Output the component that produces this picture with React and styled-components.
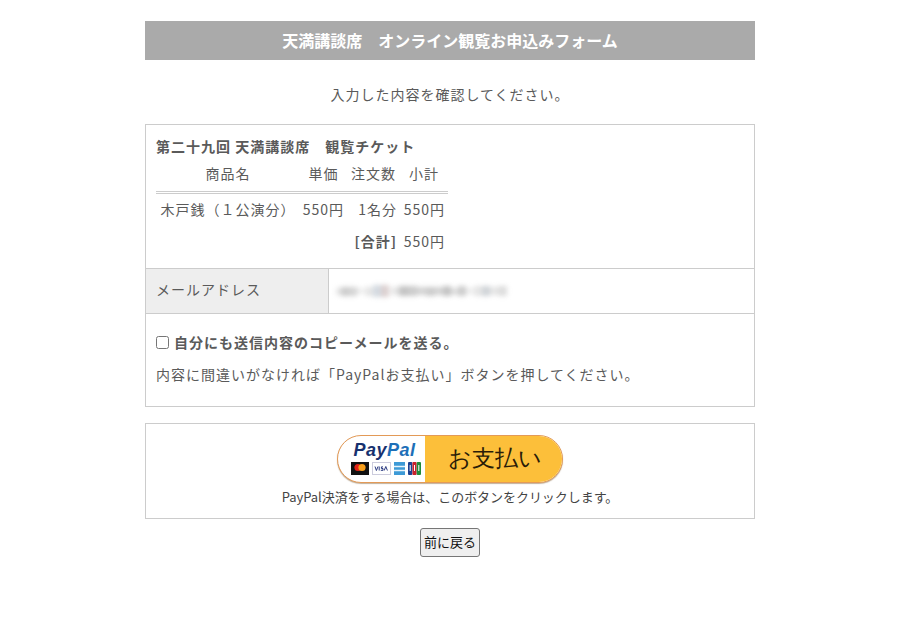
import React from "react";
import styled, { createGlobalStyle } from "styled-components";

const Global = createGlobalStyle`
  html, body { margin: 0; padding: 0; background: #fff; }
  body { font-family: "Noto Sans CJK JP", "Noto Sans", sans-serif; color: #5a5a5a; }
`;
const Page = styled.main`
  width: 610px;
  margin: 0 auto;
  padding: 21px 0 67px;
  display: flex;
  flex-direction: column;
  align-items: stretch;
`;
const Header = styled.h1`
  margin: 0;
  height: 39px;
  background: #aaa;
  color: #fff;
  font-size: 16px;
  font-weight: 700;
  line-height: 38px;
  text-align: center;
`;
const Lead = styled.p`
  margin: 0;
  height: 64px;
  font-size: 14px;
  line-height: 68px;
  letter-spacing: 1px;
  text-align: center;
`;
const Panel = styled.section`
  border: 1px solid #ccc;
  font-size: 14px;
  letter-spacing: 1px;
`;
const TicketRow = styled.div`
  height: 143px;
  box-sizing: border-box;
  padding: 9px 10px 0;
`;
const TicketTitle = styled.div`
  font-weight: 700;
  line-height: 24px;
`;
const Order = styled.table`
  border-collapse: collapse;
  width: 292px;
  margin-top: 4px;
  table-layout: fixed;
  font-size: 14px;
  letter-spacing: 1px;
  th, td { font-weight: 400; padding: 0; white-space: nowrap; }
  thead th { height: 22px; line-height: 22px; padding-bottom: 7px; border-bottom: 3px double #ccc; text-align: center; }
  tbody td { height: 34px; text-align: right; padding-right: 3px; }
  tbody tr:first-child td { height: 30px; }
  tbody td.name { text-align: center; padding-right: 0; }
  td strong { font-weight: 700; }
`;
const EmailRow = styled.div`
  display: grid;
  grid-template-columns: 183px 1fr;
  height: 45px;
  border-top: 1px solid #ccc;
  box-sizing: border-box;
`;
const EmailLabel = styled.div`
  background: #eee;
  border-right: 1px solid #ccc;
  padding-left: 10px;
  line-height: 41px;
`;
const EmailValue = styled.div`
  display: flex;
  align-items: center;
  padding-left: 7px;
`;
const Blur = styled.div`
  display: flex;
  align-items: center;
  height: 18px;
  filter: blur(2.4px);
  opacity: 0.5;
`;
const Chunk = styled.span`
  display: block;
  height: ${(p) => p.$h || 8}px;
  width: ${(p) => p.$w}px;
  background: ${(p) => p.$c || "#aaa"};
  margin-left: ${(p) => p.$g || 0}px;
`;
const CopyRow = styled.div`
  border-top: 1px solid #ccc;
  padding: 17px 10px 0;
  height: 93px;
  box-sizing: border-box;
`;
const CopyLabel = styled.label`
  display: flex;
  align-items: center;
  font-weight: 700;
  line-height: 22px;
`;
const Check = styled.input`
  width: 13px;
  height: 13px;
  margin: 1px 5px 0 0;
`;
const Note = styled.p`
  margin: 0;
  padding-top: 10px;
  line-height: 22px;
`;
const PayPanel = styled.section`
  margin-top: 16px;
  border: 1px solid #ccc;
  height: 96px;
  box-sizing: border-box;
  display: flex;
  flex-direction: column;
  align-items: center;
  padding-top: 11px;
`;
const PayButton = styled.button`
  width: 226px;
  height: 48px;
  padding: 0;
  border: 1px solid #e39a57;
  border-radius: 24px;
  overflow: hidden;
  display: grid;
  grid-template-columns: 87px 1fr;
  background: #fff;
  box-shadow: 0 1px 1px rgba(120, 80, 30, 0.45);
`;
const PayLeft = styled.span`
  display: flex;
  flex-direction: column;
  align-items: center;
  padding: 4px 0 0 8px;
`;
const PayWord = styled.span`
  font-family: "Liberation Sans", Arial, sans-serif;
  font-size: 18px;
  line-height: 20px;
  font-style: italic;
  font-weight: 700;
  letter-spacing: 0.5px;
  margin-left: -2px;
  color: #17316f;
  b { color: #1d6fb8; }
`;
const CardIcons = styled.span`
  display: flex;
  gap: 3px;
  margin-top: 2px;
`;
const PayRight = styled.span`
  background: #fcbf3a;
  color: #2a1c08;
  font-size: 23px;
  line-height: 44px;
  text-align: center;
  padding-left: 2px;
`;
const PayNote = styled.p`
  margin: 5px 0 0;
  font-size: 13px;
  line-height: 18px;
  letter-spacing: -0.05px;
  color: #444;
`;
const BackRow = styled.div`
  display: flex;
  justify-content: center;
  margin-top: 9px;
`;
const BackButton = styled.button`
  width: 60px;
  height: 29px;
  padding: 0 0 3px;
  font-family: inherit;
  font-size: 13px;
  color: #111;
  background: #efefef;
  border: 1px solid #767676;
  border-radius: 3px;
`;

const Cards = () => (
  <CardIcons>
    <svg width="18" height="13" viewBox="0 0 18 13"><rect width="18" height="13" fill="#111" /><circle cx="7" cy="5.5" r="3.6" fill="#e2231a" /><circle cx="11" cy="5.5" r="3.6" fill="#f79e1b" /></svg>
    <svg width="19" height="13" viewBox="0 0 19 13"><rect x=".5" y=".5" width="18" height="12" fill="#fff" stroke="#ccd" /><path d="M3 4.5l1.4 4 1.6-4M7.2 4.5v4M11 4.9H9.4v1.6H11V8.3H8.8M12.2 8.5l1.6-4 1.6 4" fill="none" stroke="#2a3a80" strokeWidth="1" /></svg>
    <svg width="11" height="13" viewBox="0 0 11 13"><rect width="11" height="13" fill="#3d9ad6" /><path d="M0 4.5h11M0 8.5h11" stroke="#e8f4fb" strokeWidth="1.4" /></svg>
    <svg width="13" height="13" viewBox="0 0 13 13"><rect width="4.3" height="13" rx="1" fill="#1b3f8f" /><rect x="4.4" width="4.2" height="13" rx="1" fill="#c8202c" /><rect x="8.7" width="4.3" height="13" rx="1" fill="#1e8a3a" /><path d="M2.2 3v6M6.5 3v6M10.8 3v6" stroke="#fff" strokeWidth="1" /></svg>
  </CardIcons>
);

const chunks = [
  [5, 7, "#ccc"], [8, 9, "#999"], [8, 9, "#aaa"], [7, 6, "#ddd"], [8, 9, "#ccc", 1],
  [8, 12, "#a9b6c4"], [8, 12, "#b8a0a0"], [8, 8, "#ccc", 2], [9, 10, "#888"], [9, 10, "#999"],
  [9, 8, "#aaa"], [9, 9, "#999"], [8, 8, "#aaa"], [8, 10, "#888"], [7, 7, "#bbb"],
  [8, 10, "#999"], [8, 6, "#ddd"], [8, 10, "#ccc"], [8, 10, "#a0a8b0"], [8, 8, "#ccc"], [9, 10, "#bbb"],
];

export default function App() {
  return (
    <>
      <Global />
      <Page>
        <Header>天満講談席　オンライン観覧お申込みフォーム</Header>
        <Lead>入力した内容を確認してください。</Lead>
        <Panel>
          <TicketRow>
            <TicketTitle>第二十九回 天満講談席　観覧チケット</TicketTitle>
            <Order>
              <colgroup>
                <col style={{ width: 144 }} />
                <col style={{ width: 47 }} />
                <col style={{ width: 53 }} />
                <col style={{ width: 48 }} />
              </colgroup>
              <thead>
                <tr><th>商品名</th><th>単価</th><th>注文数</th><th>小計</th></tr>
              </thead>
              <tbody>
                <tr><td className="name">木戸銭（１公演分）</td><td>550円</td><td>1名分</td><td>550円</td></tr>
                <tr><td colSpan={3}><strong>[合計]</strong></td><td>550円</td></tr>
              </tbody>
            </Order>
          </TicketRow>
          <EmailRow>
            <EmailLabel>メールアドレス</EmailLabel>
            <EmailValue>
              <Blur>
                {chunks.map(([w, h, c, g], i) => <Chunk key={i} $w={w} $h={h} $c={c} $g={g} />)}
              </Blur>
            </EmailValue>
          </EmailRow>
          <CopyRow>
            <CopyLabel><Check type="checkbox" />自分にも送信内容のコピーメールを送る。</CopyLabel>
            <Note>内容に間違いがなければ「PayPalお支払い」ボタンを押してください。</Note>
          </CopyRow>
        </Panel>
        <PayPanel>
          <PayButton type="button">
            <PayLeft>
              <PayWord>Pay<b>Pal</b></PayWord>
              <Cards />
            </PayLeft>
            <PayRight>お支払い</PayRight>
          </PayButton>
          <PayNote>PayPal決済をする場合は、このボタンをクリックします。</PayNote>
        </PayPanel>
        <BackRow><BackButton type="button">前に戻る</BackButton></BackRow>
      </Page>
    </>
  );
}
